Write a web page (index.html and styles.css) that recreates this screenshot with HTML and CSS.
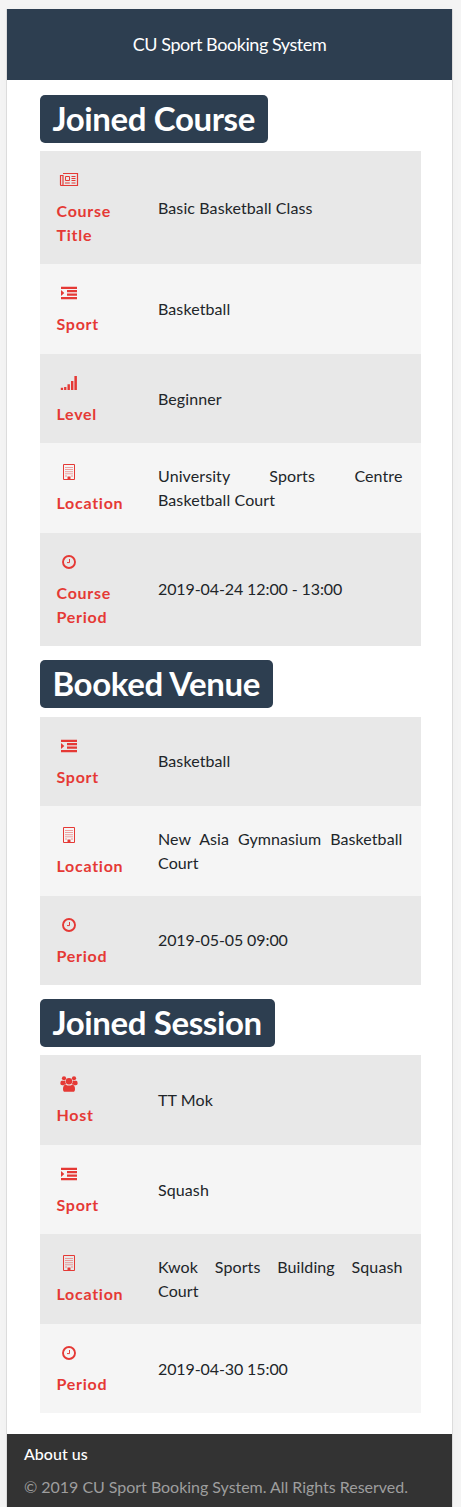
FILE: index.html
```html
<!DOCTYPE html>
<html lang="en">
<head>
<meta charset="utf-8">
<title>CU Sport Booking System</title>
<link rel="stylesheet" href="styles.css">
</head>
<body>
<svg class="sprite" aria-hidden="true">
  <symbol id="news" viewBox="0 0 20 16"><path d="M4 1.5h14.5v12H2.5q-1 0-1-1v-9H4v9q0 1-1 1" fill="none" stroke="currentColor" stroke-width="1.2"/><path d="M6.5 4.5h4v4h-4zM12.5 4.5h4M12.5 6.5h4M12.5 8.5h4M6 11h4.8M12.5 11h4" fill="none" stroke="currentColor"/></symbol>
  <symbol id="indent" viewBox="0 0 20 16"><path d="M2 1.7h16v2.2H2zM8 5.1h10v2.2H8zM8 8.5h10v2.2H8zM2 12h16v2.2H2zM2 5l3.3 3L2 11z" fill="currentColor"/></symbol>
  <symbol id="signal" viewBox="0 0 20 16"><path d="M1.8 12.8h2.3V15H1.8zM5.1 12h2.3v3H5.1zM8.5 9.3h2.4V15H8.5zM12 6h2.4v9H12zM15.4 1h2.5v14h-2.5z" fill="currentColor"/></symbol>
  <symbol id="building" viewBox="0 0 20 16"><path d="M4.5.5h11v15h-11z" fill="none" stroke="currentColor"/><path d="M6.5 3.5h7M6.5 5.5h7M6.5 7.7h7M6.5 9.8h7" fill="none" stroke="currentColor" stroke-width=".9" stroke-dasharray="1 1"/><path d="M6.5 12h1M12.5 12h1" stroke="currentColor"/><path d="M8.5 12.5h3V15h-3z" fill="currentColor"/></symbol>
  <symbol id="clock" viewBox="0 0 20 16"><circle cx="10" cy="8" r="6" fill="none" stroke="currentColor" stroke-width="1.9"/><path d="M10.5 5v3.6H8" fill="none" stroke="currentColor"/></symbol>
  <symbol id="group" viewBox="0 0 20 16"><g fill="currentColor"><circle cx="5" cy="2.3" r="2.1"/><circle cx="15" cy="2.3" r="2.1"/><circle cx="10" cy="5.2" r="3.2"/><path d="M3.2 4.4q1.8 1.2 3 .2 0 2.4 1.2 3.6-1.7 0-2.6 1H3.2q-1.9 0-1.9-2 0-2.6 1.9-2.8zM16.8 4.4q-1.8 1.2-3 .2 0 2.4-1.2 3.6 1.7 0 2.6 1h1.6q1.9 0 1.9-2 0-2.6-1.9-2.8zM6.8 8.7q3.2 1.8 6.4 0 2.8.2 2.8 4.2 0 2.9-2 2.9H6q-2 0-2-2.9 0-4 2.8-4.2z"/></g></symbol>
</svg>
<div class="page">
  <header class="topbar">CU Sport Booking System</header>
  <main class="content">
    <section class="block">
      <h1 class="title">Joined Course</h1>
      <dl class="table">
        <div class="row tall"><dt><svg class="icon"><use href="#news"/></svg>Course Title</dt><dd>Basic Basketball Class</dd></div>
        <div class="row"><dt><svg class="icon"><use href="#indent"/></svg>Sport</dt><dd>Basketball</dd></div>
        <div class="row"><dt><svg class="icon"><use href="#signal"/></svg>Level</dt><dd>Beginner</dd></div>
        <div class="row"><dt><svg class="icon"><use href="#building"/></svg>Location</dt><dd>University Sports Centre Basketball Court</dd></div>
        <div class="row tall"><dt><svg class="icon"><use href="#clock"/></svg>Course Period</dt><dd class="date">2019-04-24 12:00 - 13:00</dd></div>
      </dl>
    </section>
    <section class="block">
      <h1 class="title">Booked Venue</h1>
      <dl class="table">
        <div class="row"><dt><svg class="icon"><use href="#indent"/></svg>Sport</dt><dd>Basketball</dd></div>
        <div class="row"><dt><svg class="icon"><use href="#building"/></svg>Location</dt><dd>New Asia Gymnasium Basketball Court</dd></div>
        <div class="row"><dt><svg class="icon"><use href="#clock"/></svg>Period</dt><dd class="date">2019-05-05 09:00</dd></div>
      </dl>
    </section>
    <section class="block">
      <h1 class="title">Joined Session</h1>
      <dl class="table">
        <div class="row"><dt><svg class="icon"><use href="#group"/></svg>Host</dt><dd>TT Mok</dd></div>
        <div class="row"><dt><svg class="icon"><use href="#indent"/></svg>Sport</dt><dd>Squash</dd></div>
        <div class="row"><dt><svg class="icon"><use href="#building"/></svg>Location</dt><dd>Kwok Sports Building Squash Court</dd></div>
        <div class="row"><dt><svg class="icon"><use href="#clock"/></svg>Period</dt><dd class="date">2019-04-30 15:00</dd></div>
      </dl>
    </section>
  </main>
  <footer class="footer">
    <div class="about">About us</div>
    <div class="copy">© 2019 CU Sport Booking System. All Rights Reserved.</div>
  </footer>
</div>
</body>
</html>
```
FILE: styles.css
```css
* { box-sizing: border-box; }
body {
  margin: 0;
  padding: 9px 8px 0 6px;
  height: 1507px;
  overflow: hidden;
  background: #f4f4f4;
  font: 16px/24px Lato, "Liberation Sans", sans-serif;
  color: #212529;
}
.sprite { display: none; }
.page {
  height: 1498px;
  display: flex;
  flex-direction: column;
  background: #fff;
  border: solid #dcdcdc;
  border-width: 0 1px;
  box-shadow: 0 0 12px rgba(0, 0, 0, .02);
}
.topbar {
  flex: none;
  height: 71px;
  line-height: 71px;
  text-align: center;
  font-size: 18px;
  letter-spacing: -.44px;
  color: #fff;
  background: #2d3e50;
}
.content { flex: none; height: 1354px; padding: 15px 31px 0 33px; }
.block { margin-bottom: 14.1px; }
.title {
  width: max-content;
  height: 47.6px;
  margin: 0 0 8.8px;
  padding: 0 13px 0 12.5px;
  font-size: 33px;
  letter-spacing: -.38px;
  line-height: 47px;
  font-weight: 700;
  color: #fff;
  background: #2d3e50;
  border-radius: 5px;
}
.table { margin: 0; }
.row {
  display: grid;
  grid-template-columns: 101px 1fr;
  height: 89.45px;
  background: #f5f5f5;
}
.row:nth-child(odd) { background: #e8e8e8; }
.row.tall { height: 113.1px; }
.row.tall:last-child { height: 113.4px; }
.row dt {
  padding: 21px 15px 0 16.5px;
  color: #e53935;
  font-weight: 700;
  letter-spacing: .72px;
}
.icon { display: block; width: 20px; height: 16px; margin: 0 0 11px 2.5px; }
.row dd {
  margin: 0;
  padding: 0 18.5px 0 17px;
  align-self: center;
  text-align: justify;
  letter-spacing: .1px;
}
.row .date { letter-spacing: -.1px; }
.footer {
  flex: 1;
  padding: 8px 17px 0;
  background: #333;
}
.about { color: #fff; font-weight: 500; }
.copy { margin-top: 9px; color: #9e9e9e; white-space: nowrap; letter-spacing: -.03px; }
```
